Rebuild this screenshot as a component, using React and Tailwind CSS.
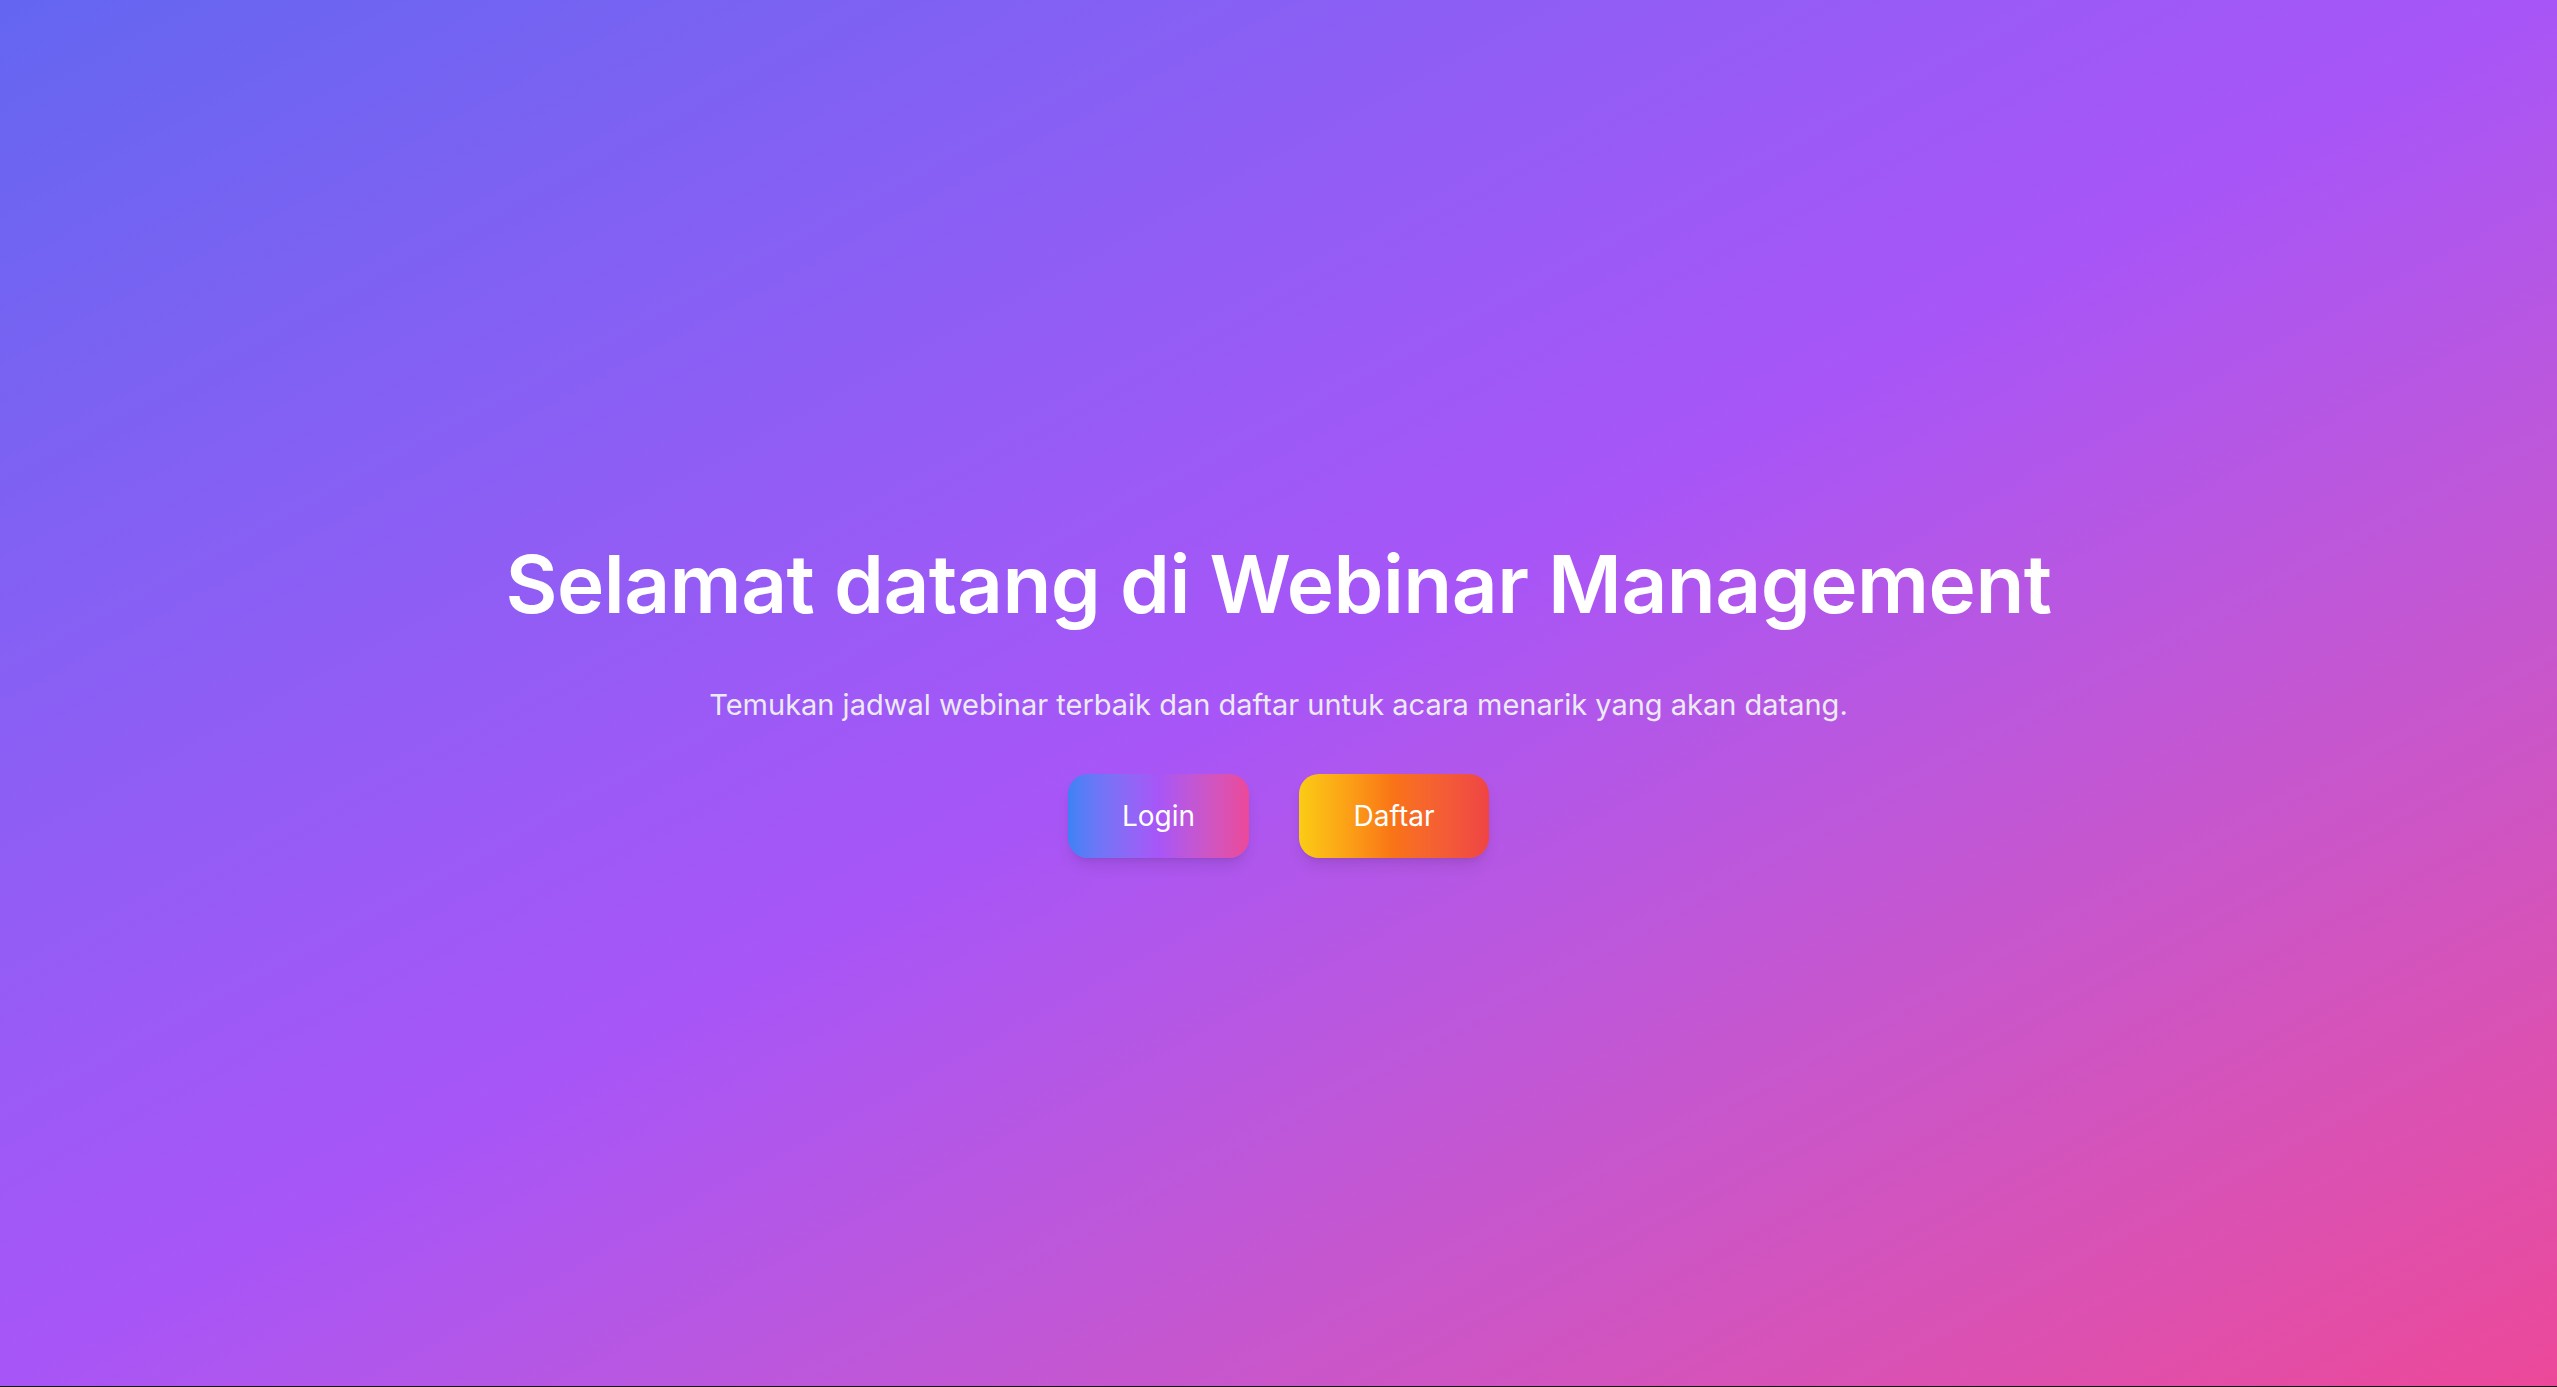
import React from "react";

const App = () => {
  return (
    <div className="min-h-screen bg-[#18181b]" style={{ fontFamily: "Inter, 'Noto Sans', sans-serif" }}>
      <div className="h-[1386px] pt-[8px] bg-gradient-to-br from-[#6366f1] via-[#a855f7] to-[#ec4899] flex flex-col items-center justify-center text-center text-white">
        {/* Heading */}
        <h1 className="text-[80px] leading-[1.2] font-semibold tracking-[-0.5px]">
          Selamat datang di Webinar Management
        </h1>
        <p className="mt-[53px] text-[29px] leading-[1.4] text-[#eceaf5]">
          Temukan jadwal webinar terbaik dan daftar untuk acara menarik yang akan datang.
        </p>

        {/* Actions */}
        <div className="mt-[49px] flex gap-[50px]">
          <button
            type="button"
            className="h-[84px] w-[181px] rounded-[20px] bg-gradient-to-r from-[#3b82f6] via-[#a855f7] to-[#ec4899] text-[28px] shadow-lg"
          >
            Login
          </button>
          <button
            type="button"
            className="h-[84px] w-[190px] rounded-[20px] bg-gradient-to-r from-[#facc15] via-[#f97316] to-[#ef4444] text-[28px] shadow-lg"
          >
            Daftar
          </button>
        </div>
      </div>
    </div>
  );
};

export default App;
